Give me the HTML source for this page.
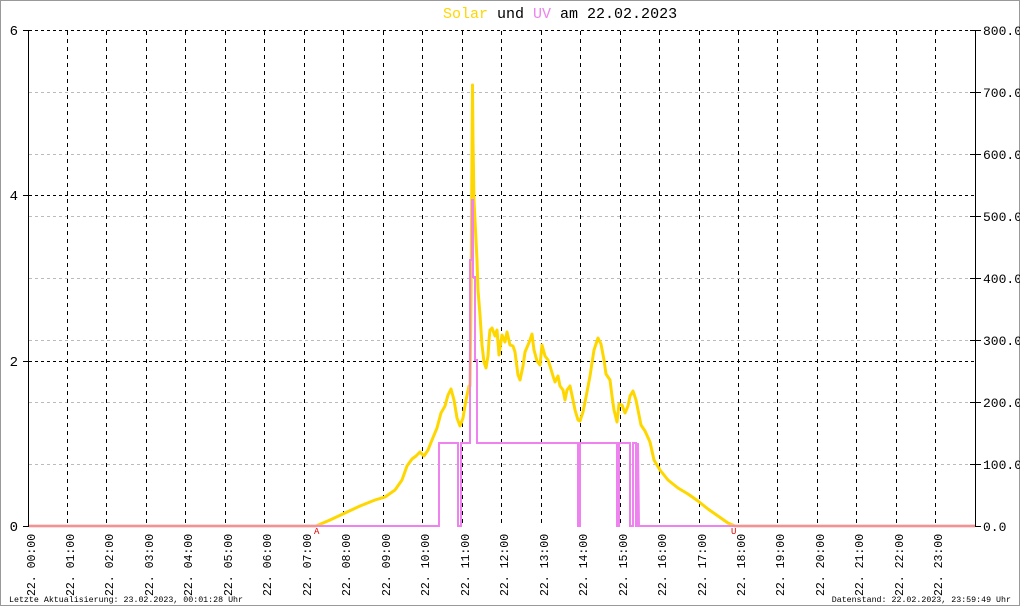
<!DOCTYPE html>
<html><head><meta charset="utf-8"><style>
html,body{margin:0;padding:0;background:#fff}
svg{display:block}
text{font-family:"Liberation Mono","DejaVu Sans Mono",monospace}
</style></head><body>
<svg width="1020" height="606" viewBox="0 0 1020 606" xmlns="http://www.w3.org/2000/svg">
<rect x="0.5" y="0.5" width="1019" height="605" fill="#fff" stroke="#999"/>
<text x="443" y="18" font-size="15"><tspan fill="#ffd700">Solar</tspan><tspan fill="#000"> und </tspan><tspan fill="#ee82ee">UV</tspan><tspan fill="#000"> am 22.02.2023</tspan></text>
<g stroke="#bbb" stroke-dasharray="3,3" stroke-width="1">
<line x1="29" y1="92.5" x2="975" y2="92.5"/><line x1="29" y1="154.5" x2="975" y2="154.5"/><line x1="29" y1="216.5" x2="975" y2="216.5"/><line x1="29" y1="278.5" x2="975" y2="278.5"/><line x1="29" y1="340.5" x2="975" y2="340.5"/><line x1="29" y1="402.5" x2="975" y2="402.5"/><line x1="29" y1="464.5" x2="975" y2="464.5"/>
</g>
<g stroke="#000" stroke-dasharray="3,3" stroke-width="1">
<line x1="29" y1="30.5" x2="975" y2="30.5"/><line x1="29" y1="195.5" x2="975" y2="195.5"/><line x1="29" y1="361.5" x2="975" y2="361.5"/>
</g>
<g stroke="#000" stroke-dasharray="4,4" stroke-width="1" id="vg"></g>
<g stroke="#000" stroke-width="1">
<line x1="28.5" y1="30" x2="28.5" y2="527"/><line x1="975.5" y1="30" x2="975.5" y2="527"/>
<line x1="23" y1="30.5" x2="29" y2="30.5"/><line x1="23" y1="195.5" x2="29" y2="195.5"/><line x1="23" y1="361.5" x2="29" y2="361.5"/><line x1="23" y1="526.5" x2="29" y2="526.5"/>
<line x1="970" y1="30.5" x2="981" y2="30.5"/><line x1="970" y1="92.5" x2="981" y2="92.5"/><line x1="970" y1="154.5" x2="981" y2="154.5"/><line x1="970" y1="216.5" x2="981" y2="216.5"/><line x1="970" y1="278.5" x2="981" y2="278.5"/><line x1="970" y1="340.5" x2="981" y2="340.5"/><line x1="970" y1="402.5" x2="981" y2="402.5"/><line x1="970" y1="464.5" x2="981" y2="464.5"/><line x1="970" y1="526.5" x2="981" y2="526.5"/>
</g>
<g font-size="14" fill="#000" text-anchor="end">
<text x="18" y="35">6</text><text x="18" y="200">4</text><text x="18" y="366">2</text><text x="18" y="531">0</text>
</g>
<g font-size="13" fill="#000">
<text x="983" y="35">800.0</text><text x="983" y="97">700.0</text><text x="983" y="159">600.0</text><text x="983" y="221">500.0</text><text x="983" y="283">400.0</text><text x="983" y="345">300.0</text><text x="983" y="407">200.0</text><text x="983" y="469">100.0</text><text x="983" y="531">0.0</text>
</g>
<g stroke="#000" stroke-dasharray="4,4">
<line x1="67.5" y1="31" x2="67.5" y2="526"/><line x1="106.5" y1="31" x2="106.5" y2="526"/><line x1="146.5" y1="31" x2="146.5" y2="526"/><line x1="185.5" y1="31" x2="185.5" y2="526"/><line x1="225.5" y1="31" x2="225.5" y2="526"/><line x1="264.5" y1="31" x2="264.5" y2="526"/><line x1="304.5" y1="31" x2="304.5" y2="526"/><line x1="343.5" y1="31" x2="343.5" y2="526"/><line x1="383.5" y1="31" x2="383.5" y2="526"/><line x1="422.5" y1="31" x2="422.5" y2="526"/><line x1="462.5" y1="31" x2="462.5" y2="526"/><line x1="501.5" y1="31" x2="501.5" y2="526"/><line x1="541.5" y1="31" x2="541.5" y2="526"/><line x1="580.5" y1="31" x2="580.5" y2="526"/><line x1="620.5" y1="31" x2="620.5" y2="526"/><line x1="659.5" y1="31" x2="659.5" y2="526"/><line x1="699.5" y1="31" x2="699.5" y2="526"/><line x1="738.5" y1="31" x2="738.5" y2="526"/><line x1="777.5" y1="31" x2="777.5" y2="526"/><line x1="817.5" y1="31" x2="817.5" y2="526"/><line x1="856.5" y1="31" x2="856.5" y2="526"/><line x1="896.5" y1="31" x2="896.5" y2="526"/><line x1="935.5" y1="31" x2="935.5" y2="526"/>
</g>
<polyline fill="none" stroke="#ffd700" stroke-width="3" stroke-linejoin="round" points="29,526 316,526 330,520 345,513 360,506 375,500 385,497 395,490 402,480 407,466 412,459 416,456 420,452 424,456 428,450 432,440 437,428 441,413 445,406 448,395 451,389 454,400 457,418 460,426 463,418 466,400 469,386 470,386 471,300 472,150 472.5,85 473,140 474,200 476,240 477,260 478,290 480,315 482,345 484,362 486,368 488,356 489,340 490,330 492,328 495,336 497,330 499,355 502,335 505,342 507,332 510,345 513,346 515,352 518,375 520,380 523,366 525,352 528,345 530,340 532,334 534,350 537,361 540,365 542,345 545,356 548,360 550,366 553,376 555,382 558,376 560,386 563,390 565,400 567,390 570,386 573,400 575,410 578,420 580,421 583,412 587,392 590,376 594,350 598,338 601,344 604,360 606,374 610,380 612,396 614,410 617,422 619,404 622,405 625,413 628,406 630,396 633,391 636,400 638,410 641,425 645,431 650,442 654,460 660,470 668,480 678,488 688,494 698,501 708,509 718,516 728,523 735,526 975,526"/>
<polyline fill="none" stroke="#ee82ee" stroke-width="2" points="29,526 439,526 439,443 458,443 458,526 461,526 461,443 470,443 470,260 472,260 472,200 473,200 473,277 475,277 475,360 477,360 477,443 578,443 578,526 580,526 580,443 617,443 617,526 619,526 619,443 630,443 630,526 633,526 633,443 636,443 636,526 638,526 638,443 639,526 975,526"/>
<text x="314" y="534" font-size="9" fill="#e00000">A</text>
<text x="731" y="534" font-size="9" fill="#e00000">U</text>
<g font-size="11.5" fill="#000">
<text transform="translate(35,596) rotate(-90)">22. 00:00</text>
<text transform="translate(74,596) rotate(-90)">22. 01:00</text>
<text transform="translate(113,596) rotate(-90)">22. 02:00</text>
<text transform="translate(153,596) rotate(-90)">22. 03:00</text>
<text transform="translate(192,596) rotate(-90)">22. 04:00</text>
<text transform="translate(232,596) rotate(-90)">22. 05:00</text>
<text transform="translate(271,596) rotate(-90)">22. 06:00</text>
<text transform="translate(311,596) rotate(-90)">22. 07:00</text>
<text transform="translate(350,596) rotate(-90)">22. 08:00</text>
<text transform="translate(390,596) rotate(-90)">22. 09:00</text>
<text transform="translate(429,596) rotate(-90)">22. 10:00</text>
<text transform="translate(469,596) rotate(-90)">22. 11:00</text>
<text transform="translate(508,596) rotate(-90)">22. 12:00</text>
<text transform="translate(548,596) rotate(-90)">22. 13:00</text>
<text transform="translate(587,596) rotate(-90)">22. 14:00</text>
<text transform="translate(627,596) rotate(-90)">22. 15:00</text>
<text transform="translate(666,596) rotate(-90)">22. 16:00</text>
<text transform="translate(706,596) rotate(-90)">22. 17:00</text>
<text transform="translate(745,596) rotate(-90)">22. 18:00</text>
<text transform="translate(784,596) rotate(-90)">22. 19:00</text>
<text transform="translate(824,596) rotate(-90)">22. 20:00</text>
<text transform="translate(863,596) rotate(-90)">22. 21:00</text>
<text transform="translate(903,596) rotate(-90)">22. 22:00</text>
<text transform="translate(942,596) rotate(-90)">22. 23:00</text>
</g>
<text x="9" y="602" font-size="8.3" fill="#000">Letzte Aktualisierung: 23.02.2023, 00:01:28 Uhr</text>
<text x="1011" y="602" font-size="8.3" fill="#000" text-anchor="end">Datenstand: 22.02.2023, 23:59:49 Uhr</text>
</svg>
</body></html>
